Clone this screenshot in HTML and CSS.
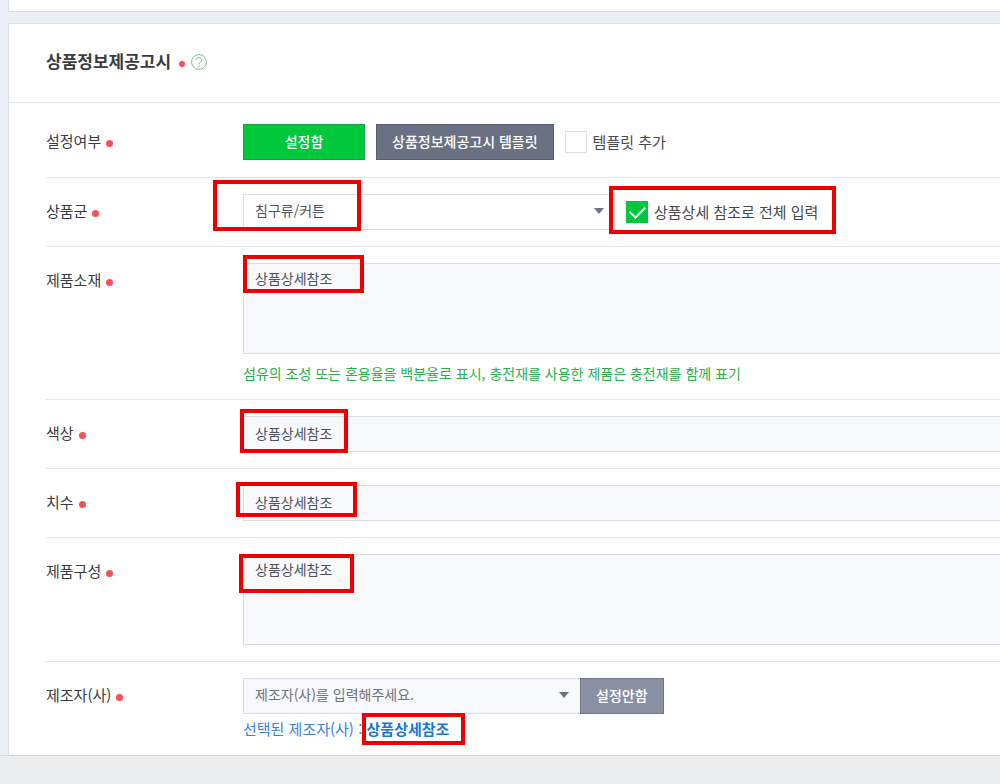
FILE: index.html
```html
<!DOCTYPE html>
<html lang="ko">
<head>
  <meta charset="UTF-8">
  <meta name="viewport" content="width=device-width, initial-scale=1.0">
  <title>상품정보제공고시</title>
  <link rel="stylesheet" href="styles.css">
</head>
<body>
  <main class="content">
    <section class="card card-prev"></section>

    <section class="card">
      <header class="card-header">
        <h2>상품정보제공고시</h2>
        <span class="dot dot-small"></span>
        <button type="button" class="help-btn" aria-label="도움말">
          <svg width="16" height="16" viewBox="0 0 16 16" fill="none" stroke="#7cc08a">
            <circle cx="8" cy="8" r="7.4"/>
            <path d="M5.2 6.2C5.2 4.5 6.4 3.6 8 3.6s2.8 1 2.8 2.4c0 1.9-2.7 2.1-2.7 4.3M8.1 11.4v1.4"/>
          </svg>
        </button>
      </header>

      <form class="form">
        <div class="row">
          <div class="row-label"><span>설정여부</span><span class="dot"></span></div>
          <div class="row-body">
            <div class="controls">
              <button type="button" class="btn btn-green">설정함</button>
              <button type="button" class="btn btn-dark">상품정보제공고시 템플릿</button>
              <div class="check">
                <input type="checkbox" id="addTemplate">
                <label for="addTemplate">템플릿 추가</label>
              </div>
            </div>
          </div>
        </div>

        <div class="row">
          <div class="row-label"><label for="productGroup">상품군</label><span class="dot"></span></div>
          <div class="row-body">
            <div class="controls">
              <div class="select-box select-group">
                <select id="productGroup">
                  <option>침구류/커튼</option>
                </select>
                <svg class="arrow" width="10" height="6" viewBox="0 0 10 6"><path d="M0 0h10L5 6z" fill="#6b7280"/></svg>
                <span class="mark mark-group"></span>
              </div>
              <div class="check">
                <input type="checkbox" id="fillAll" checked>
                <label for="fillAll">상품상세 참조로 전체 입력</label>
                <span class="mark mark-check"></span>
              </div>
            </div>
          </div>
        </div>

        <div class="row">
          <div class="row-label"><label for="material">제품소재</label><span class="dot"></span></div>
          <div class="row-body">
            <div class="field">
              <textarea id="material">상품상세참조</textarea>
              <span class="mark mark-material"></span>
            </div>
            <p class="hint">섬유의 조성 또는 혼용율을 백분율로 표시, 충전재를 사용한 제품은 충전재를 함께 표기</p>
          </div>
        </div>

        <div class="row">
          <div class="row-label"><label for="color">색상</label><span class="dot"></span></div>
          <div class="row-body">
            <div class="field">
              <input type="text" id="color" value="상품상세참조">
              <span class="mark mark-color"></span>
            </div>
          </div>
        </div>

        <div class="row">
          <div class="row-label"><label for="size">치수</label><span class="dot"></span></div>
          <div class="row-body">
            <div class="field">
              <input type="text" id="size" value="상품상세참조">
              <span class="mark mark-size"></span>
            </div>
          </div>
        </div>

        <div class="row">
          <div class="row-label"><label for="composition">제품구성</label><span class="dot"></span></div>
          <div class="row-body">
            <div class="field">
              <textarea id="composition">상품상세참조</textarea>
              <span class="mark mark-composition"></span>
            </div>
          </div>
        </div>

        <div class="row">
          <div class="row-label"><label for="maker">제조자(사)</label><span class="dot"></span></div>
          <div class="row-body">
            <div class="controls controls-joined">
              <div class="select-box select-maker">
                <select id="maker">
                  <option>제조자(사)를 입력해주세요.</option>
                </select>
                <svg class="arrow" width="10" height="6" viewBox="0 0 10 6"><path d="M0 0h10L5 6z" fill="#6b7280"/></svg>
              </div>
              <button type="button" class="btn btn-gray">설정안함</button>
            </div>
            <p class="selected">선택된 제조자(사) : <strong>상품상세참조<span class="mark mark-maker"></span></strong></p>
          </div>
        </div>
      </form>
    </section>
  </main>

  <footer class="bottom-bar"></footer>
</body>
</html>
```
FILE: styles.css
```css
* {
  box-sizing: border-box;
}

body {
  margin: 0;
  min-height: 100vh;
  display: flex;
  flex-direction: column;
  font-family: "Noto Sans CJK KR", "Noto Sans", sans-serif;
  font-size: 15px;
  color: #3a3c41;
  background-color: #ebeff5;
}

button, input, select, textarea {
  font-family: inherit;
  font-size: 14px;
  margin: 0;
}

.content {
  padding-left: 8px;
}

/* Cards */
.card {
  background-color: #fff;
  border: 1px solid #dadde1;
  border-right: 0;
  border-bottom: 0;
}

.card-prev {
  height: 12px;
  margin-bottom: 11px;
  border-top: 0;
  border-bottom: 1px solid #dadde1;
}

.card-header {
  display: flex;
  align-items: center;
  height: 79px;
  padding-bottom: 2px;
  padding-left: 37px;
  border-bottom: 1px solid #e0e3e6;
}

.card-header h2 {
  margin: 0;
  padding-bottom: 2px;
  font-size: 17px;
  font-weight: 700;
  line-height: 24px;
}

.help-btn {
  display: flex;
  margin-left: 6px;
  padding: 0;
  border: 0;
  background: none;
  cursor: pointer;
}

.dot {
  width: 7px;
  height: 7px;
  margin-top: 6px;
  margin-left: 5px;
  border-radius: 50%;
  background-color: #fb4e57;
}

.dot-small {
  width: 6px;
  height: 6px;
  margin-top: 4px;
  margin-left: 8px;
}

/* Form rows */
.form {
  padding-top: 5px;
  padding-left: 37px;
}

.row {
  display: flex;
  padding: 16px 0;
}

.row:first-child {
  padding-bottom: 17px;
}

.row + .row {
  border-top: 1px solid #e3e5e9;
}

.row-label {
  display: flex;
  align-items: center;
  flex: 0 0 197px;
  height: 32px;
}

.row-body {
  flex: 1;
  min-width: 0;
}

.controls {
  display: flex;
  align-items: center;
  gap: 11px;
}

.controls-joined {
  gap: 0;
}

/* Buttons */
.btn {
  height: 36px;
  padding: 0 15px 2px;
  border: 1px solid;
  color: #fff;
  font-weight: 500;
  white-space: nowrap;
  cursor: pointer;
}

.btn-green {
  width: 122px;
  background-color: #00c73c;
  border-color: #15a53f;
}

.btn-dark {
  background-color: #697183;
  border-color: #555d6e;
}

.btn-gray {
  background-color: #8b91a4;
  border-color: #6d7489;
}

/* Fields */
.field, .select-box, .check {
  position: relative;
}

.field input, .field textarea, .select-box select {
  display: block;
  width: 100%;
  height: 36px;
  padding: 0 11px 2px;
  border: 1px solid #d9dce1;
  border-radius: 0;
  background-color: #f8f9fd;
  color: #50535a;
  outline: none;
}

.field input, .field textarea {
  border-right: 0;
}

.field textarea {
  height: 91px;
  padding-top: 4px;
  line-height: 20px;
  resize: none;
}

.select-box select {
  padding-bottom: 4px;
  appearance: none;
}

.select-group {
  flex: 0 1 372px;
}

.select-group select {
  background-color: #fff;
}

.select-maker {
  flex: 0 1 337px;
}

.select-maker select {
  border-right: 0;
  color: #70737a;
}

.arrow {
  position: absolute;
  top: 14px;
  right: 11px;
  pointer-events: none;
}

.check {
  display: flex;
  align-items: center;
  gap: 6px;
  color: #45484e;
  white-space: nowrap;
}

.check label {
  padding-bottom: 2px;
}

.check input {
  display: grid;
  place-items: center;
  width: 22px;
  height: 22px;
  appearance: none;
  border: 1px solid #dcdfe2;
  background-color: #fff;
}

.check input:checked {
  border-color: #00c73c;
  background-color: #00c73c;
}

.check input:checked::after {
  content: "";
  width: 13px;
  height: 7px;
  margin-bottom: 4px;
  border-left: 2px solid #fff;
  border-bottom: 2px solid #fff;
  transform: rotate(-45deg);
}

.hint {
  margin: 9px 0 0;
  font-size: 14px;
  line-height: 20px;
  color: #27b04b;
}

.selected {
  margin: 5px 0 0;
  line-height: 20px;
  color: #3c7fd0;
}

.selected strong {
  position: relative;
  font-weight: 700;
  color: #1877d8;
}

/* Red highlight boxes over the fields */
.mark {
  position: absolute;
  border: 4px solid #ee0000;
  pointer-events: none;
}

.mark-group {
  top: -14px;
  left: -30px;
  width: 148px;
  height: 51px;
}

.mark-check {
  top: -15px;
  right: -18px;
  bottom: -10px;
  left: -17px;
}

.mark-material {
  top: -8px;
  left: 0;
  width: 121px;
  height: 38px;
}

.mark-color {
  top: -7px;
  left: -3px;
  width: 108px;
  height: 44px;
}

.mark-size {
  top: -3px;
  left: -7px;
  width: 121px;
  height: 35px;
}

.mark-composition {
  top: 0;
  left: -4px;
  width: 115px;
  height: 39px;
}

.mark-maker {
  top: -5px;
  right: -16px;
  bottom: -6px;
  left: -5px;
}

.bottom-bar {
  flex: 1;
  min-height: 29px;
  border-top: 1px solid #d6d8da;
  background-color: #ebecee;
}
```
